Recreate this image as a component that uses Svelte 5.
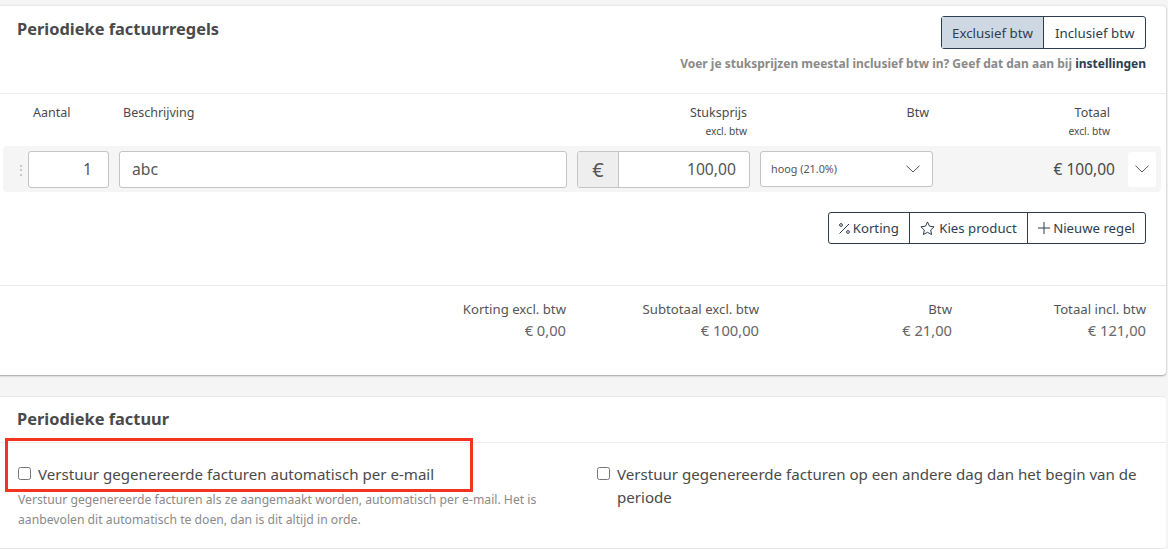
<script>
  const totals = [
    { label: 'Korting excl. btw', value: '€ 0,00' },
    { label: 'Subtotaal excl. btw', value: '€ 100,00' },
    { label: 'Btw', value: '€ 21,00' },
    { label: 'Totaal incl. btw', value: '€ 121,00' },
  ];
</script>

<div class="page">
  <section class="card first">
    <header class="card-head">
      <h2>Periodieke factuurregels</h2>
      <div class="head-right">
        <div class="toggle">
          <span class="toggle-item active">Exclusief btw</span>
          <span class="toggle-item">Inclusief btw</span>
        </div>
        <p class="hint">Voer je stuksprijzen meestal inclusief btw in? Geef dat dan aan bij <a href="#top">instellingen</a></p>
      </div>
    </header>

    <div class="lines">
      <div class="cols labels">
        <span></span>
        <span class="l-qty">Aantal</span>
        <span class="l-desc">Beschrijving</span>
        <span class="l-price">Stuksprijs<small>excl. btw</small></span>
        <span class="l-vat">Btw</span>
        <span class="l-total">Totaal<small>excl. btw</small></span>
      </div>

      <div class="cols row">
        <span class="handle">⋮</span>
        <div class="field qty">1</div>
        <div class="field desc">abc</div>
        <div class="field price">
          <span class="addon">€</span>
          <span class="amount">100,00</span>
        </div>
        <div class="field select">
          <span>hoog (21.0%)</span>
          <svg width="14" height="8" viewBox="0 0 14 8"><path d="M.5.7 7 7 13.500.7" fill="none" stroke="#555" /></svg>
        </div>
        <div class="row-total">€ 100,00</div>
        <div class="more">
          <svg width="14" height="8" viewBox="0 0 14 8"><path d="M.5.7 7 7 13.500.7" fill="none" stroke="#555" /></svg>
        </div>
      </div>
    </div>

    <div class="actions">
      <div class="btn-group">
        <span class="btn">
          <svg width="11" height="11" viewBox="0 0 11 11" fill="none" stroke="#2c3e50"><path d="M.5 10.500 10 1" /><circle cx="2" cy="2" r="1.400" /><circle cx="9" cy="9" r="1.400" /></svg>
          Korting
        </span>
        <span class="btn star">
          <svg width="15" height="14" viewBox="0 0 15 14" fill="none" stroke="#2c3e50"><path d="m7.500 1 2 4.200 4.600.6-3.400 3.200.9 4.500-4.100-2.200-4.100 2.200.9-4.500L.9 5.800l4.600-.6z" /></svg>
          Kies product
        </span>
        <span class="btn">
          <svg width="12" height="12" viewBox="0 0 12 12" fill="none" stroke="#2c3e50"><path d="M6 0v12M0 6h12" /></svg>
          Nieuwe regel
        </span>
      </div>
    </div>

    <div class="totals">
      {#each totals as t}
        <div class="total">
          <span class="t-label">{t.label}</span>
          <span class="t-value">{t.value}</span>
        </div>
      {/each}
    </div>
  </section>

  <section class="card second">
    <header class="simple-head">
      <h2>Periodieke factuur</h2>
    </header>
    <div class="options">
      <div class="option left">
        <label><input type="checkbox" /><span>Verstuur gegenereerde facturen automatisch per e-mail</span></label>
        <p>Verstuur gegenereerde facturen als ze aangemaakt worden, automatisch per e-mail. Het is aanbevolen dit automatisch te doen, dan is dit altijd in orde.</p>
      </div>
      <div class="option right">
        <label><input type="checkbox" /><span>Verstuur gegenereerde facturen op een andere dag dan het begin van de periode</span></label>
      </div>
    </div>
    <div class="highlight"></div>
  </section>
</div>

<style>
  :global(body) {
    background: #f5f5f5;
    font-family: "Noto Sans", sans-serif;
    color: #4a4a4a;
    overflow: hidden;
  }

  .page {
    height: 549px;
    padding-top: 5px;
    box-sizing: border-box;
  }

  .card {
    background: #fff;
    margin: 0 2px 0 -4px;
    border-radius: 4px;
    border-top: 1px solid #e8e8e8;
    position: relative;
  }

  .first {
    height: 370px;
    box-sizing: border-box;
    box-shadow: 0 1px 2px rgba(0, 0, 0, 0.35);
    margin-bottom: 21px;
  }

  .second {
    height: 153px;
    box-sizing: border-box;
    border-bottom: 1px solid #e8e8e8;
  }

  h2 {
    margin: 0;
    font-size: 16.400px;
    font-weight: 700;
    color: #4a4a4a;
  }

  /* Header */
  .card-head {
    display: flex;
    justify-content: space-between;
    height: 88px;
    box-sizing: border-box;
    padding: 10px 20px 0 21px;
    border-bottom: 1px solid #ececec;
  }

  .card-head h2 {
    line-height: 26px;
  }

  .head-right {
    display: flex;
    flex-direction: column;
    align-items: flex-end;
  }

  .toggle {
    display: flex;
    border: 1px solid #2c3e50;
    border-radius: 3px;
    height: 33px;
    box-sizing: border-box;
    color: #2c3e50;
    font-size: 13.300px;
  }

  .toggle-item {
    display: flex;
    align-items: center;
    padding: 0 10.500px;
  }

  .toggle-item.active {
    background: #ced8e2;
    border-right: 1px solid #2c3e50;
  }

  .hint {
    margin: 7px 0 0;
    font-size: 12px;
    line-height: 16px;
    font-weight: 700;
    color: #8a8a8a;
  }

  .hint a {
    color: #2c3e50;
    text-decoration: none;
  }

  /* Lines table */
  .cols {
    display: grid;
    grid-template-columns: 25px 81px 458px 183px 183px 195px 28px;
  }

  .labels {
    margin-left: 7px;
    padding-top: 11px;
    height: 41px;
    font-size: 12.500px;
    line-height: 16px;
    color: #4a4a4a;
    width: 1158px;
  }

  .labels small {
    display: block;
    font-size: 10.200px;
    line-height: 20px;
  }

  .l-qty { padding-left: 5px; }
  .l-desc { padding-left: 14px; }
  .l-price { text-align: right; padding-right: 3px; }
  .l-vat { text-align: right; padding-right: 4px; }
  .l-total { text-align: right; padding-right: 18px; }

  .row {
    margin-left: 7px;
    width: 1158px;
    height: 46px;
    background: #f5f5f5;
    border-radius: 4px;
    align-items: center;
    box-sizing: border-box;
    padding-right: 5px;
  }

  .handle {
    color: #bbb;
    font-size: 14px;
    text-align: center;
    padding-left: 11px;
  }

  .field {
    background: #fff;
    border: 1px solid #c4c4c4;
    border-radius: 3px;
    height: 37px;
    box-sizing: border-box;
    display: flex;
    align-items: center;
    font-size: 15.700px;
    color: #555;
  }

  .qty {
    justify-content: flex-end;
    padding-right: 16px;
  }

  .desc {
    margin-left: 10px;
    padding-left: 12px;
  }

  .price {
    margin-left: 10px;
    overflow: hidden;
  }

  .addon {
    width: 41px;
    height: 100%;
    background: #eeeeee;
    border-right: 1px solid #c4c4c4;
    display: flex;
    align-items: center;
    justify-content: center;
    font-size: 20px;
    box-sizing: border-box;
  }

  .amount {
    flex: 1;
    text-align: right;
    padding-right: 13px;
  }

  .select {
    margin-left: 10px;
    height: 36px;
    margin-top: -1px;
    justify-content: space-between;
    padding: 0 12px 0 10px;
    font-size: 10.800px;
  }

  .row-total {
    text-align: right;
    padding-right: 13px;
    font-size: 15.500px;
    color: #4a4a4a;
  }

  .more {
    background: #fff;
    border-radius: 3px;
    height: 35px;
    display: flex;
    align-items: center;
    justify-content: center;
  }

  /* Action buttons */
  .actions {
    display: flex;
    justify-content: flex-end;
    padding: 20px 20px 0 0;
    height: 73px;
    box-sizing: content-box;
  }

  .btn-group {
    display: flex;
    height: 32px;
    box-sizing: border-box;
    border: 1px solid #2c3e50;
    border-radius: 3px;
    color: #2c3e50;
    font-size: 13.200px;
  }

  .btn {
    display: flex;
    align-items: center;
    gap: 3px;
    padding: 0 10px;
  }

  .btn.star {
    gap: 4px;
    padding: 0 10.500px;
  }

  .btn + .btn {
    border-left: 1px solid #2c3e50;
  }

  /* Totals */
  .totals {
    display: grid;
    grid-template-columns: 1fr 193px 193px 194px;
    border-top: 1px solid #e8e8e8;
    padding: 14px 20px 0 0;
  }

  .total {
    display: flex;
    flex-direction: column;
    align-items: flex-end;
  }

  .t-label {
    font-size: 13.200px;
    line-height: 18px;
    color: #555;
  }

  .t-value {
    font-size: 14.700px;
    line-height: 24px;
    color: #666;
  }

  /* Second card */
  .simple-head {
    height: 46px;
    box-sizing: border-box;
    padding: 10px 21px 0;
    border-bottom: 1px solid #ececec;
  }

  .simple-head h2 {
    line-height: 24px;
  }

  .options {
    display: grid;
    grid-template-columns: 601px 1fr;
    padding-top: 20px;
  }

  .option.left {
    padding: 0 20px 0 22px;
  }

  .option.right {
    padding-right: 20px;
  }

  label {
    display: flex;
    align-items: flex-start;
    gap: 7px;
    font-size: 15.100px;
    line-height: 23px;
    color: #4a4a4a;
  }

  input {
    width: 13px;
    height: 13px;
    margin: 4px 0 0;
    flex: none;
  }

  .option p {
    margin: 4px 0 0;
    font-size: 12.200px;
    line-height: 20px;
    color: #8a8a8a;
  }

  .highlight {
    position: absolute;
    left: 9px;
    top: 41px;
    width: 468px;
    height: 54px;
    box-sizing: border-box;
    border: 3.500px solid #f43420;
  }
</style>
